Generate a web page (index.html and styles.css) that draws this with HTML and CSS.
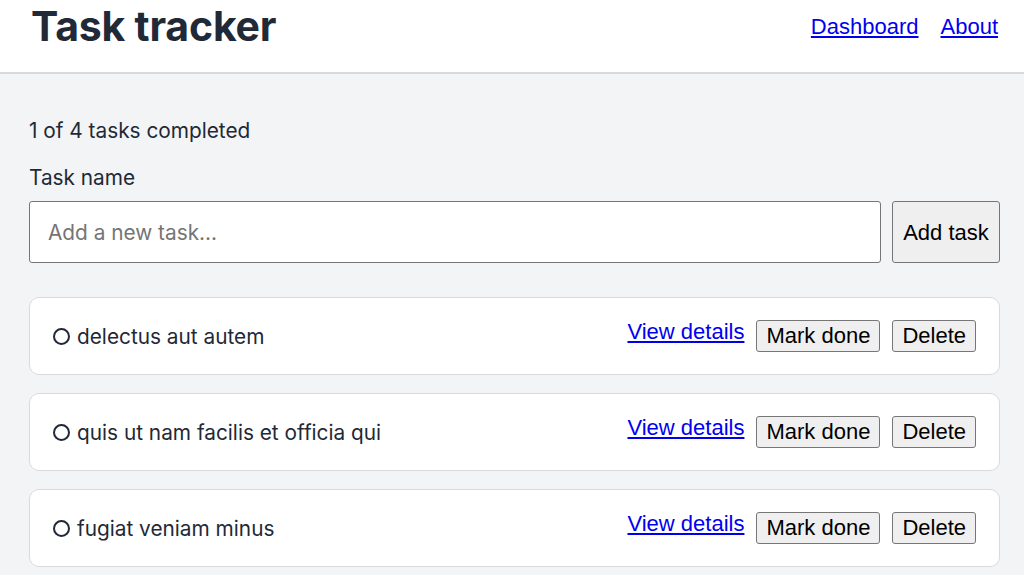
FILE: index.html
```html
<!DOCTYPE html>
<html lang="en">
<head>
<meta charset="utf-8">
<title>Task tracker</title>
<link rel="stylesheet" href="styles.css">
</head>
<body>
<header class="topbar">
  <h1 class="title">Task tracker</h1>
  <nav class="nav">
    <a href="#">Dashboard</a>
    <a href="#">About</a>
  </nav>
</header>
<main class="main">
  <p class="summary">1 of 4 tasks completed</p>
  <form class="add-form">
    <label class="label" for="task">Task name</label>
    <div class="add-row">
      <input id="task" class="input" type="text" placeholder="Add a new task...">
      <button type="button" class="btn btn-add">Add task</button>
    </div>
  </form>
  <ul class="tasks">
    <li class="task">
      <span class="task-name"><span class="circle"></span>delectus aut autem</span>
      <span class="actions"><a href="#" class="details">View details</a><button class="btn">Mark done</button><button class="btn">Delete</button></span>
    </li>
    <li class="task">
      <span class="task-name"><span class="circle"></span>quis ut nam facilis et officia qui</span>
      <span class="actions"><a href="#" class="details">View details</a><button class="btn">Mark done</button><button class="btn">Delete</button></span>
    </li>
    <li class="task">
      <span class="task-name"><span class="circle"></span>fugiat veniam minus</span>
      <span class="actions"><a href="#" class="details">View details</a><button class="btn">Mark done</button><button class="btn">Delete</button></span>
    </li>
  </ul>
</main>
</body>
</html>
```

FILE: styles.css
```css
* { box-sizing: border-box; }
html, body { margin: 0; padding: 0; }
body {
  font-family: Inter, "Noto Sans", sans-serif;
  color: #1f2937;
  background: #f3f4f6;
  font-size: 20.8px;
}
.topbar {
  background: #ffffff;
  border-bottom: 2px solid #d9dadd;
  height: 74px;
  display: flex;
  justify-content: space-between;
  align-items: flex-start;
  padding: 0 26px 0 31px;
}
.title {
  margin: 0;
  font-size: 41px;
  font-weight: 700;
  line-height: 52px;
  letter-spacing: -0.2px;
  color: #1f2937;
}
.nav {
  display: flex;
  gap: 22px;
  padding-top: 14px;
  font-family: "Liberation Sans", Arial, sans-serif;
  font-size: 22px;
}
.nav a { color: #0000ee; text-decoration: underline; }
.main {
  padding: 43px 24px 0 29px;
}
.summary {
  margin: 0 0 19px;
  line-height: 28px;
}
.label {
  display: block;
  line-height: 28px;
  margin-bottom: 9px;
}
.add-row {
  display: flex;
  gap: 11px;
}
.input {
  flex: 1;
  height: 62px;
  border: 1.5px solid #767676;
  border-radius: 3px;
  padding: 0 18px;
  font-family: Inter, sans-serif;
  font-size: 20.8px;
  color: #1f2937;
  background: #fff;
}
.input::placeholder { color: #757575; }
.btn {
  font-family: "Liberation Sans", Arial, sans-serif;
  font-size: 22px;
  color: #000;
  background: #efefef;
  border: 1.5px solid #767676;
  border-radius: 3px;
  padding: 0 9px;
  height: 32px;
}
.btn-add {
  height: 62px;
  width: 108px;
  padding: 2px 0 0;
}
.tasks {
  list-style: none;
  margin: 34px 0 0;
  padding: 0;
  display: flex;
  flex-direction: column;
  gap: 18px;
}
.task {
  background: #fff;
  border: 1.5px solid #d9dadd;
  border-radius: 10px;
  height: 78px;
  display: flex;
  align-items: center;
  justify-content: space-between;
  padding: 0 23px 0 23px;
}
.task-name {
  display: flex;
  align-items: center;
  gap: 7px;
}
.circle {
  width: 17px;
  height: 17px;
  border: 2px solid #1f2937;
  border-radius: 50%;
  display: inline-block;
}
.actions {
  display: flex;
  align-items: center;
  gap: 12px;
}
.details {
  font-family: "Liberation Sans", Arial, sans-serif;
  font-size: 22px;
  color: #0000ee;
  text-decoration: underline;
  margin-top: -8px;
}
```
